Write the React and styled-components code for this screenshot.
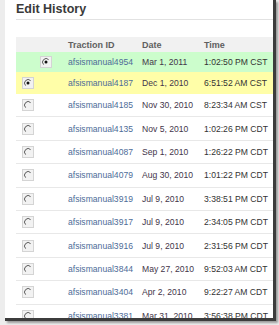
import React from 'react';
import styled, { createGlobalStyle } from 'styled-components';

const GlobalStyle = createGlobalStyle`
    html, body {
        margin: 0;
        padding: 0;
        background: #ffffff;
    }
`;

const Frame = styled.div`
    width: 279px;
    height: 325px;
    overflow: hidden;
    background: #ededed;
    padding-left: 5px;
    box-sizing: border-box;
`;

const Window = styled.div`
    width: 271px;
    height: 321px;
    box-sizing: border-box;
    background: #ffffff;
    border-right: 3px solid #3c3c3c;
    border-bottom: 3px solid #3c3c3c;
    box-shadow: 2px 2px 2px rgba(0, 0, 0, 0.35);
    padding-left: 11px;
    overflow: hidden;
    font-family: 'Liberation Sans', Arial, sans-serif;
`;

const Title = styled.h2`
    margin: 0;
    padding: 2px 0 0 0;
    height: 20px;
    box-sizing: border-box;
    font-size: 12.5px;
    font-weight: bold;
    color: #3a3a3a;
    border-bottom: 1px solid #e2e2e2;
    line-height: 14px;
`;

const Table = styled.div`
    margin-top: 17px;
    display: flex;
    flex-direction: column;
`;

const Row = styled.div`
    display: grid;
    grid-template-columns: 20px 28px 78px 62px 1fr;
    align-items: center;
    height: ${({ h }) => h}px;
    box-sizing: border-box;
    background: ${({ bg }) => bg || '#ffffff'};
    border-bottom: ${({ line }) => (line ? '1px solid #e8e8e8' : 'none')};
    font-size: 8.6px;
    white-space: nowrap;
`;

const HeaderRow = styled(Row)`
    background: #f1f1f1;
    color: #606060;
    font-size: 9px;
    font-weight: bold;
    align-items: end;
    padding-bottom: 2px;
`;

const Cell = styled.div`
    padding-left: ${({ pl }) => pl || 0}px;
`;

const RadioCell = styled.div`
    display: flex;
    align-items: center;
    padding-left: ${({ pl }) => pl || 0}px;
`;

const IdLink = styled.span`
    color: #4e6c98;
`;

const DateText = styled.span`
    color: #43364a;
`;

const TimeText = styled.span`
    color: #333333;
`;

function Radio({ checked }) {
    return (
        <svg width="12" height="12" viewBox="0 0 12 12">
            <rect x="0.5" y="0.5" width="11" height="11" fill="#f2f2f2" stroke="#d4d4d4" />
            <path
                d="M3.6 8.6 A3.3 3.3 0 0 1 8.6 3.6"
                fill="none"
                stroke="#5a5a5a"
                strokeWidth="1"
            />
            {checked ? <circle cx="6" cy="6" r="1.5" fill="#111" /> : null}
        </svg>
    );
}

const rows = [
    { id: 'afsismanual4954', date: 'Mar 1, 2011', time: '1:02:50 PM CST', bg: '#ccfdcc', col: 2, checked: true, h: 20 },
    { id: 'afsismanual4187', date: 'Dec 1, 2010', time: '6:51:52 AM CST', bg: '#fffea8', col: 1, checked: true, h: 22 },
    { id: 'afsismanual4185', date: 'Nov 30, 2010', time: '8:23:34 AM CST' },
    { id: 'afsismanual4135', date: 'Nov 5, 2010', time: '1:02:26 PM CDT' },
    { id: 'afsismanual4087', date: 'Sep 1, 2010', time: '1:26:22 PM CDT' },
    { id: 'afsismanual4079', date: 'Aug 30, 2010', time: '1:01:22 PM CDT' },
    { id: 'afsismanual3919', date: 'Jul 9, 2010', time: '3:38:51 PM CDT' },
    { id: 'afsismanual3917', date: 'Jul 9, 2010', time: '2:34:05 PM CDT' },
    { id: 'afsismanual3916', date: 'Jul 9, 2010', time: '2:31:56 PM CDT' },
    { id: 'afsismanual3844', date: 'May 27, 2010', time: '9:52:03 AM CDT' },
    { id: 'afsismanual3404', date: 'Apr 2, 2010', time: '9:22:27 AM CDT' },
    { id: 'afsismanual3381', date: 'Mar 31, 2010', time: '3:56:38 PM CDT' },
];

export default function App() {
    return (
        <>
            <GlobalStyle />
            <Frame>
                <Window>
                    <Title>Edit History</Title>
                    <Table>
                        <HeaderRow h={15}>
                            <Cell />
                            <Cell />
                            <Cell pl={4}>Traction ID</Cell>
                            <Cell>Date</Cell>
                            <Cell>Time</Cell>
                        </HeaderRow>
                        {rows.map((r) => (
                            <Row key={r.id} h={r.h || 23.4} bg={r.bg} line={!r.bg}>
                                <RadioCell pl={6}>
                                    {r.col !== 2 ? <Radio checked={r.checked} /> : null}
                                </RadioCell>
                                <RadioCell pl={4}>
                                    {r.col === 2 ? <Radio checked={r.checked} /> : null}
                                </RadioCell>
                                <Cell pl={4}>
                                    <IdLink>{r.id}</IdLink>
                                </Cell>
                                <Cell>
                                    <DateText>{r.date}</DateText>
                                </Cell>
                                <Cell>
                                    <TimeText>{r.time}</TimeText>
                                </Cell>
                            </Row>
                        ))}
                    </Table>
                </Window>
            </Frame>
        </>
    );
}
